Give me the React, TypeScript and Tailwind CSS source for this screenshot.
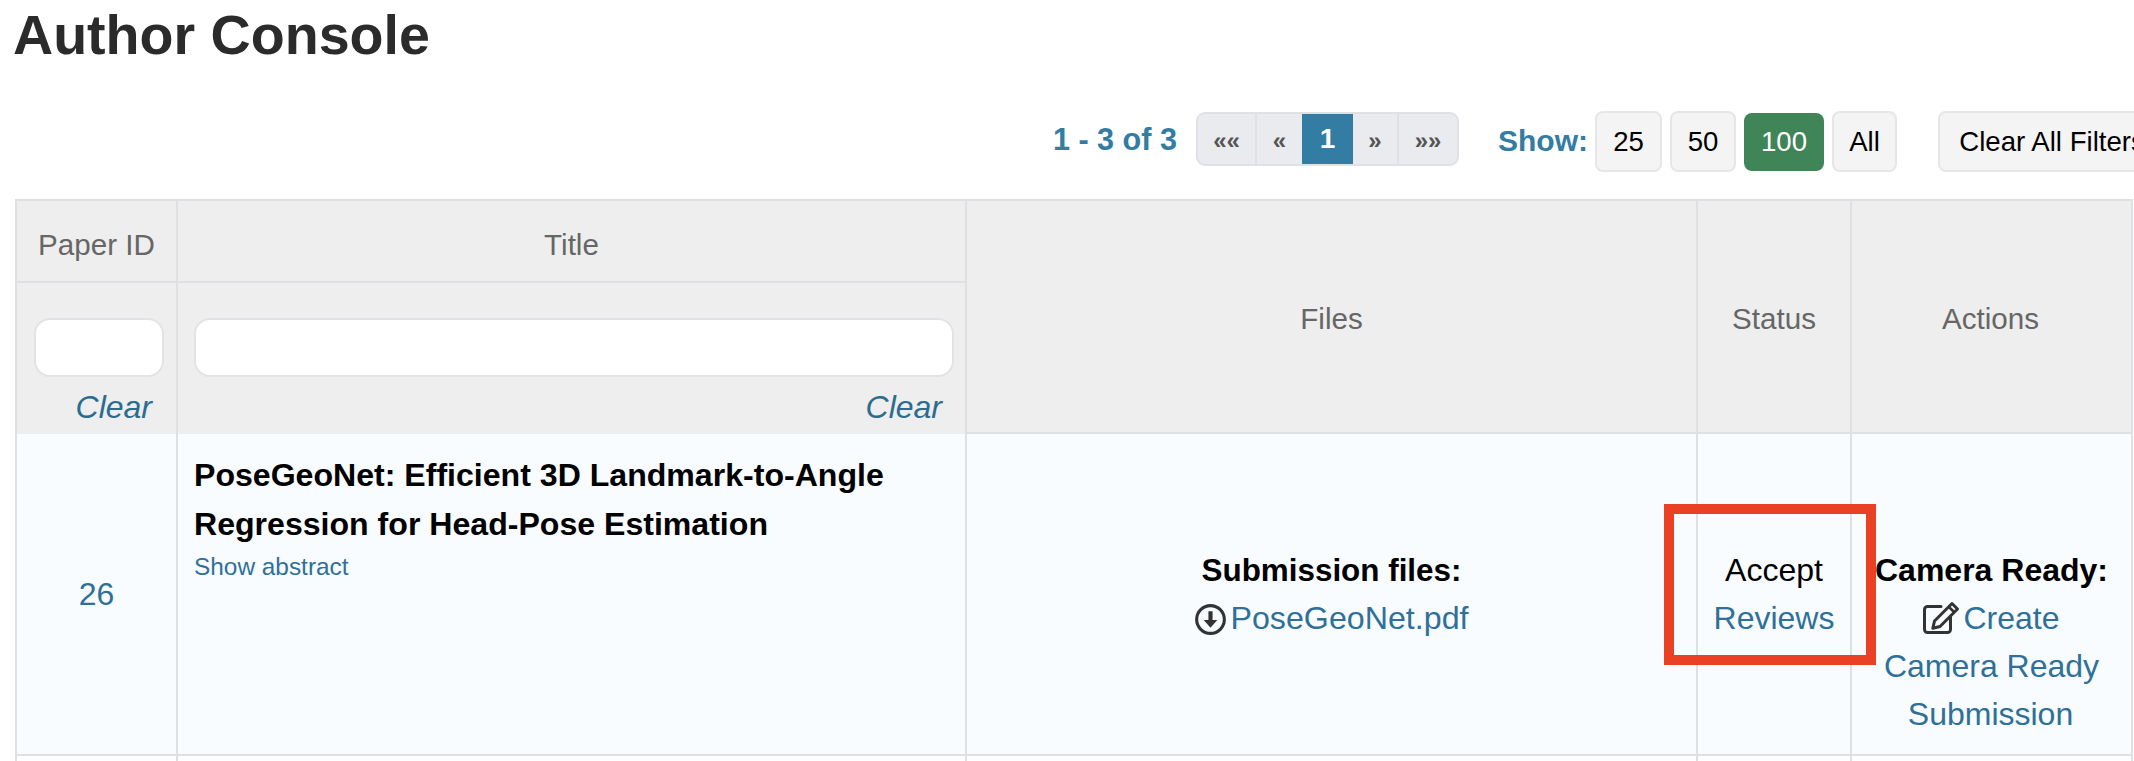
import React from "react";

const sans = "font-['Liberation_Sans',Arial,sans-serif]";

function ArrowCircle() {
  return (
    <svg width="31" height="31" viewBox="0 0 30 30" className="inline-block align-[-6px] mr-[5px]" aria-hidden="true">
      <circle cx="15" cy="15" r="13.4" fill="none" stroke="#333" strokeWidth="3" />
      <path d="M13 7h4v8.500h4.600L15 23l-6.600-7.500H13z" fill="#333" />
    </svg>
  );
}

function EditIcon() {
  return (
    <svg width="37" height="33" viewBox="0 0 37 33" className="inline-block align-[-5px] mr-[3px]" aria-hidden="true">
      <path d="M18 5.500H4.500a3 3 0 0 0-3 3V28.500a3 3 0 0 0 3 3H24.500a3 3 0 0 0 3-3V16" fill="none" stroke="#333" strokeWidth="3" strokeLinecap="round" />
      <path d="M29 2.500l5.500 5.500L17 25.500l-7.200 1.800L11.500 20z" fill="none" stroke="#333" strokeWidth="3" strokeLinejoin="round" />
      <path d="M26 6l5.500 5.500" fill="none" stroke="#333" strokeWidth="2.500" />
    </svg>
  );
}

function PageCell({ w, children, border = true }: { w: string; children: React.ReactNode; border?: boolean }) {
  return (
    <span className={`${w} ${border ? "border-r-2 border-[#dfe1e5]" : ""} h-full flex items-center justify-center pt-[4px] text-[24px] font-bold text-[#555]`}>
      {children}
    </span>
  );
}

function ShowButton({ w, children }: { w: string; children: React.ReactNode }) {
  return (
    <span className={`${w} h-[61px] flex items-center justify-center rounded-[8px] border-2 border-[#e6e6e8] bg-[#f4f4f5] text-[27.6px] text-black`}>
      {children}
    </span>
  );
}

function FilterCell({ pad }: { pad: string }) {
  return (
    <th className="border-r-2 border-[#dfe0e3] p-0 align-top font-normal">
      <div className={`flex flex-col ${pad} pt-[35px]`}>
        <span className="h-[59px] block rounded-[16px] border-2 border-[#e2e3e6] bg-white" />
        <em className="mt-[5px] pr-[12px] text-right text-[32px] leading-[50px] text-[#2b6c8f]">Clear</em>
      </div>
    </th>
  );
}

export default function App() {
  return (
    <div className={`${sans} w-[2134px] h-[761px] overflow-hidden bg-white`}>
      <h1 className="pl-[13px] pt-[2px] h-[111px] text-[55.6px] leading-[66px] font-bold text-[#2b2b2b]">Author Console</h1>

      <div className="flex items-center justify-end w-[2166px] h-[61px]">
        <span className="text-[30.6px] font-bold text-[#337ca3] mr-[19px] mb-[3px]">1 - 3 of 3</span>
        <div className="w-[263px] h-[54px] mb-[5px] flex items-stretch rounded-[9px] border-2 border-[#dfe1e5] bg-[#e9ebef] overflow-hidden mr-[39px]">
          <PageCell w="w-[59px]">««</PageCell>
          <PageCell w="w-[45px]" border={false}>«</PageCell>
          <span className="w-[51px] -my-[2px] bg-[#337ca3] flex items-center justify-center text-[28px] font-bold text-white">1</span>
          <PageCell w="w-[46px]">»</PageCell>
          <PageCell w="flex-1" border={false}>»»</PageCell>
        </div>
        <span className="text-[30px] font-bold text-[#337ca3] mr-[7px] mb-[3px]">Show:</span>
        <div className="flex items-center gap-[8px] mr-[41px]">
          <ShowButton w="w-[67px]">25</ShowButton>
          <ShowButton w="w-[66px]">50</ShowButton>
          <span className="w-[80px] h-[58px] flex items-center justify-center rounded-[8px] bg-[#3f8558] text-[27.6px] text-white">100</span>
          <ShowButton w="w-[65px]">All</ShowButton>
        </div>
        <ShowButton w="w-[228px]"><span className="whitespace-nowrap">Clear All Filters</span></ShowButton>
      </div>

      <table className="ml-[15px] mt-[27px] w-[2118px] table-fixed border-separate border-spacing-0 border-l-2 border-t-2 border-[#dfe0e3] bg-[#eeeeee]">
        <colgroup>
          <col className="w-[161px]" />
          <col className="w-[789px]" />
          <col className="w-[731px]" />
          <col className="w-[154px]" />
          <col className="w-[281px]" />
        </colgroup>
        <thead>
          <tr className="h-[82px]">
            <th className="pt-[8px] text-[29.6px] font-normal text-[#666] border-r-2 border-b-2 border-[#dfe0e3]">Paper ID</th>
            <th className="pt-[8px] text-[29.6px] font-normal text-[#666] border-r-2 border-b-2 border-[#dfe0e3]">Title</th>
            <th rowSpan={2} className="pt-[6px] text-[29.6px] font-normal text-[#666] border-r-2 border-b-2 border-[#dfe0e3]">Files</th>
            <th rowSpan={2} className="pt-[6px] text-[29.6px] font-normal text-[#666] border-r-2 border-b-2 border-[#dfe0e3]">Status</th>
            <th rowSpan={2} className="pt-[6px] pr-[2px] text-[29.6px] font-normal text-[#666] border-r-2 border-b-2 border-[#dfe0e3]">Actions</th>
          </tr>
          <tr className="h-[151px]">
            <FilterCell pad="pl-[17px] pr-[12px]" />
            <FilterCell pad="pl-[16px] pr-[11px]" />
          </tr>
        </thead>
        <tbody>
          <tr className="h-[322px]">
            <td className="bg-[#f8fcff] text-center text-[32px] text-[#2f7099] border-r-2 border-b-2 border-[#dfe0e3]">26</td>
            <td className="bg-[#f8fcff] align-top pl-[16px] pt-[17px] border-r-2 border-b-2 border-[#dfe0e3]">
              <div className="text-[32.1px] leading-[49px] font-bold text-black w-[720px]">PoseGeoNet: Efficient 3D Landmark-to-Angle Regression for Head-Pose Estimation</div>
              <div className="text-[24.4px] leading-[36px] text-[#2f7099]">Show abstract</div>
            </td>
            <td className="bg-[#f8fcff] text-center text-[32px] leading-[48px] border-r-2 border-b-2 border-[#dfe0e3]">
              <div className="font-bold text-[31.4px] text-black pt-[1px] -mb-[1px]">Submission files:</div>
              <div className="text-[#2f7099] text-[32.2px]"><ArrowCircle />PoseGeoNet.pdf</div>
            </td>
            <td className="bg-[#f8fcff] text-center text-[32px] leading-[48px] border-r-2 border-b-2 border-[#dfe0e3]">
              <div className="text-black">Accept</div>
              <div className="text-[#2f7099]">Reviews</div>
            </td>
            <td className="bg-[#f8fcff] align-top relative text-center text-[32px] leading-[48px] pt-[112px] border-r-2 border-b-2 border-[#dfe0e3]">
              <div className="font-bold text-black whitespace-nowrap">Camera Ready:</div>
              <div className="text-[#2f7099]"><EditIcon />Create</div>
              <div className="text-[#2f7099]">Camera Ready</div>
              <div className="text-[#2f7099] pr-[2px]">Submission</div>
              <div className="absolute left-[-188px] top-[70px] w-[212px] h-[161px] border-[10px] border-[#ea4125]" />
            </td>
          </tr>
          <tr className="h-[40px]">
            <td className="bg-white border-r-2 border-[#dfe0e3]" />
            <td className="bg-white border-r-2 border-[#dfe0e3]" />
            <td className="bg-white border-r-2 border-[#dfe0e3]" />
            <td className="bg-white border-r-2 border-[#dfe0e3]" />
            <td className="bg-white border-r-2 border-[#dfe0e3]" />
          </tr>
        </tbody>
      </table>
    </div>
  );
}
